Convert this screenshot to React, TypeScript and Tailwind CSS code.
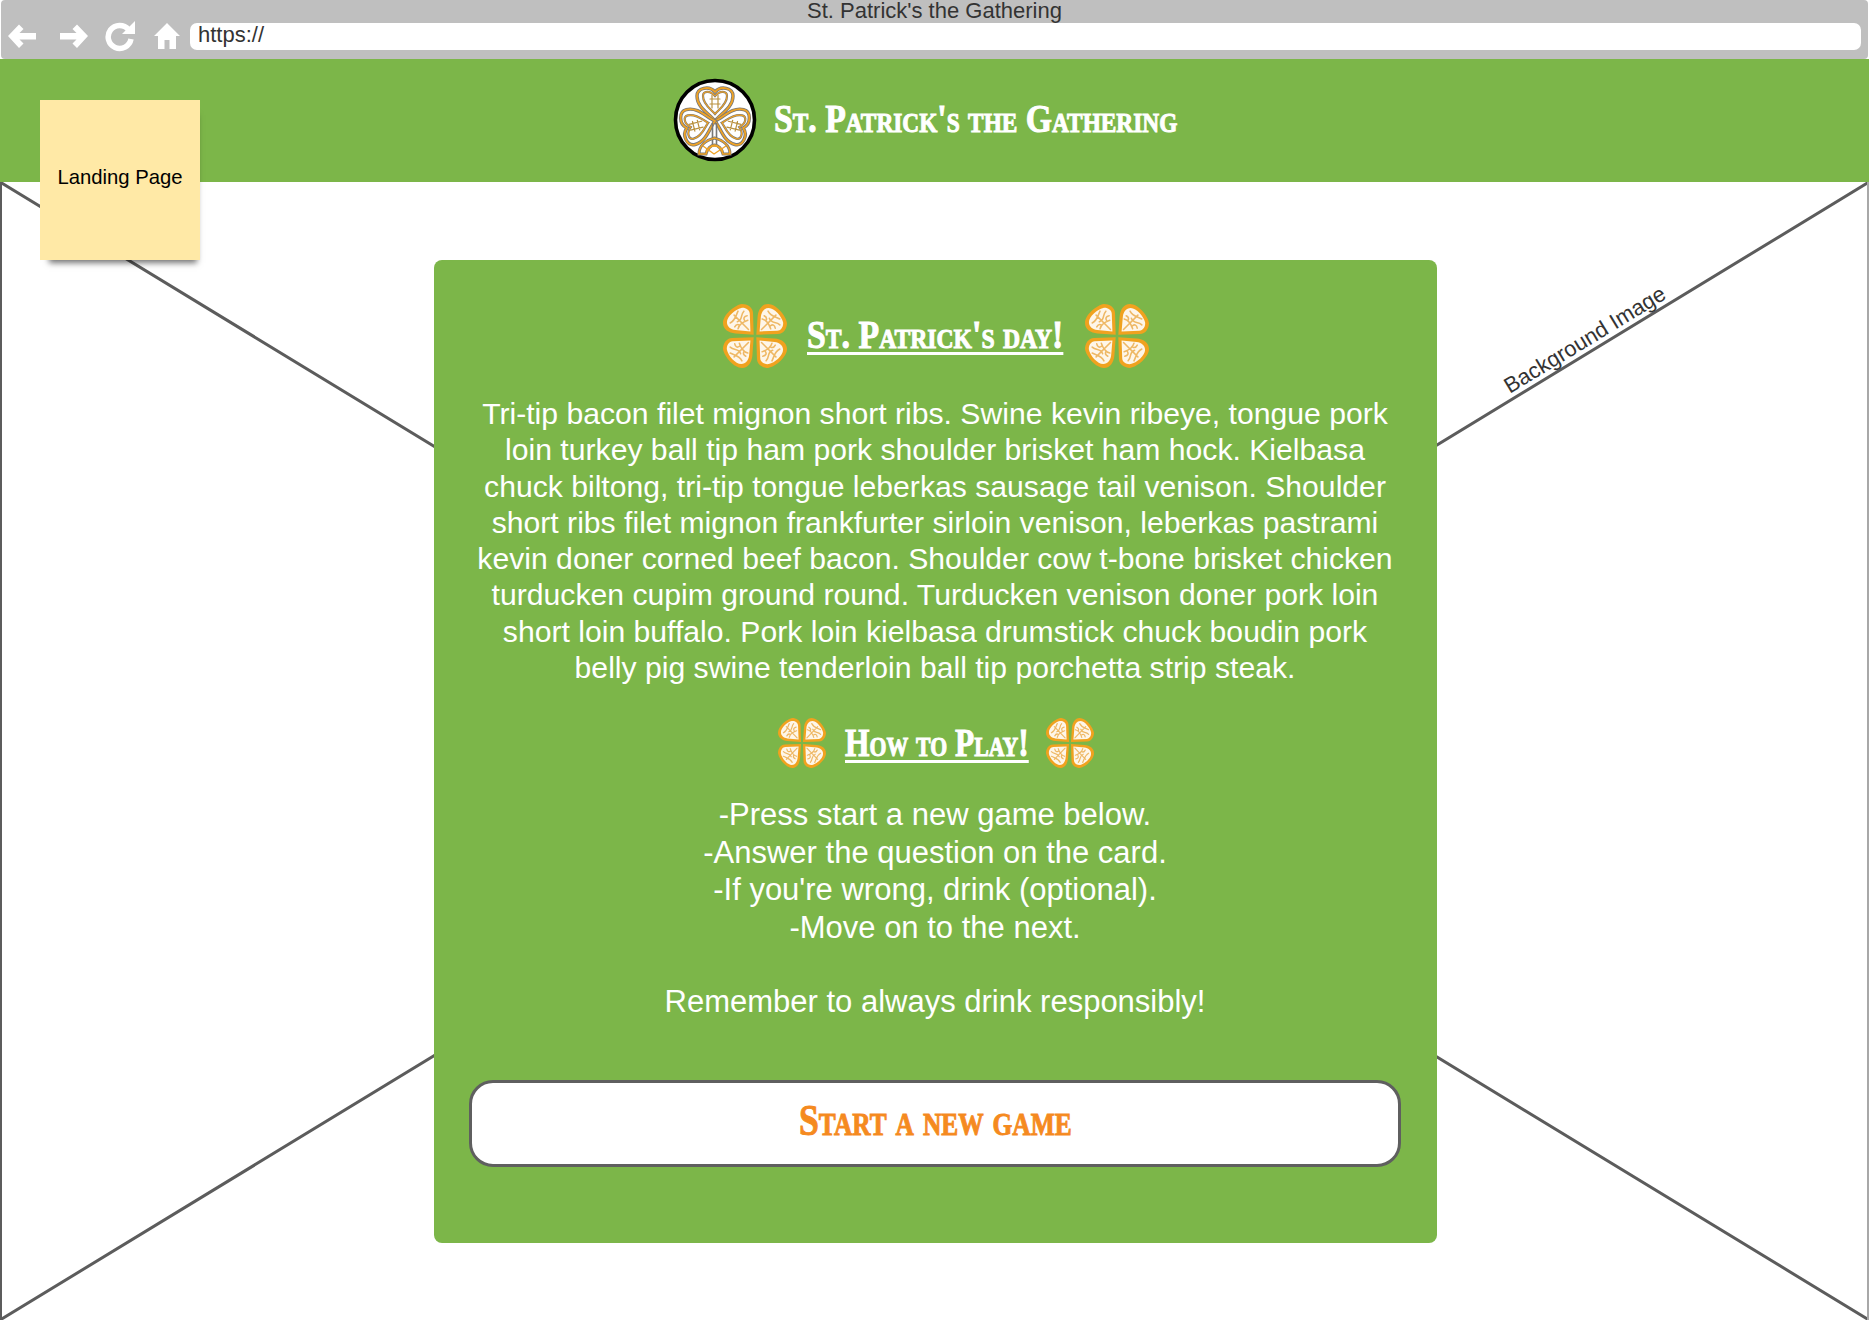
import React from "react";

const HEART = "M0 0C-5 -7 -18 -13 -18 -25C-18 -33 -6 -36 0 -29C6 -36 18 -33 18 -25C18 -13 5 -7 0 0Z";
const INNER = "M0 -7C-3 -11 -12 -16 -12 -25C-12 -30 -5 -31 0 -25C5 -31 12 -30 12 -25C12 -16 3 -11 0 -7Z";
const ARROW = "M2 15L13 3.5L17.5 8L13.5 12H30V18.5H13.5L17.5 22.5L13 27Z";

function LogoHeart({ r }: { r: number }) {
  return (
    <g transform={`translate(42 43) rotate(${r})`} fill="none" strokeLinecap="round">
      <path d={HEART} stroke="#777" strokeWidth="3.4" />
      <path d={HEART} stroke="#efa326" strokeWidth="1.8" />
      <path d={INNER} stroke="#777" strokeWidth="2.2" />
      <path d={INNER} stroke="#efa326" strokeWidth="1.1" />
      <path d="M-5 -22H5M-5 -17H5M-3 -26V-13M3 -26V-13" stroke="#b9913f" strokeWidth="1.2" />
    </g>
  );
}

function Logo() {
  return (
    <svg viewBox="0 0 84 84" className="w-[84px] h-[84px] shrink-0">
      <circle cx="42" cy="42" r="39.5" fill="#fff" stroke="#000" strokeWidth="3.6" />
      <LogoHeart r={0} />
      <LogoHeart r={104} />
      <LogoHeart r={-104} />
      <path d="M39.5 45V66M43.5 45V66" fill="none" stroke="#777" strokeWidth="1.6" />
      <path d="M41.5 60C34 62 26 67 26 76H33C34 71 38 67 41.5 67C45 67 49 71 50 76H57C57 67 49 62 41.5 60Z" fill="none" stroke="#777" strokeWidth="3" />
      <path d="M41.5 60C34 62 26 67 26 76H33C34 71 38 67 41.5 67C45 67 49 71 50 76H57C57 67 49 62 41.5 60Z" fill="none" stroke="#efa326" strokeWidth="1.6" />
      <path d="M33 74C37 66 46 66 50 74M30 68L41 76L53 68" fill="none" stroke="#efa326" strokeWidth="1.4" />
    </svg>
  );
}

function Leaf({ r }: { r: number }) {
  return (
    <g transform={`translate(50 50) rotate(${r})`}>
      <path d="M-2 -2L-3 -35C-3 -44 -12 -49 -20 -49C-32 -47 -49 -32 -49 -20C-49 -10 -40 -5 -30 -4Z" fill="#f0a21f" />
      <path d="M-7 -7L-8 -34C-8 -40 -15 -44 -21 -43C-30 -41 -43 -30 -43 -21C-43 -14 -37 -10 -30 -9Z" fill="#fff" fillOpacity="0.9" />
      <path d="M-10 -10L-32 -32M-26 -11C-24 -19 -17 -22 -11 -24M-38 -20C-30 -24 -30 -30 -26 -38M-17 -38C-23 -32 -18 -25 -27 -22M-12 -31C-17 -30 -18 -27 -16 -24M-31 -14C-29 -18 -26 -18 -24 -17" fill="none" stroke="#eeb865" strokeWidth="2.4" strokeLinecap="round" />
    </g>
  );
}

function Clover({ className }: { className: string }) {
  return (
    <svg viewBox="1 1 98 98" preserveAspectRatio="none" className={className}>
      <Leaf r={0} />
      <Leaf r={90} />
      <Leaf r={180} />
      <Leaf r={270} />
    </svg>
  );
}

const slab = "font-['Liberation_Serif',serif] font-bold [font-variant-caps:small-caps] whitespace-nowrap inline-block origin-left [-webkit-text-stroke:1px_currentColor] text-left";

export default function App() {
  return (
    <div className="relative w-[1869px] h-[1320px] bg-white overflow-hidden font-['Liberation_Sans',Arial,sans-serif]">
      <svg className="absolute left-0 top-[182px] w-[1869px] h-[1138px]" viewBox="0 0 1869 1138">
        <path d="M0 0L1869 1138M1869 0L0 1138" stroke="#5c5c5c" strokeWidth="3" fill="none" />
        <path d="M1 0V1138" stroke="#5c5c5c" strokeWidth="2" />
        <path d="M1868 0V1138" stroke="#a8a8a8" strokeWidth="2" />
      </svg>

      {/* browser bar */}
      <div className="relative h-[59px] mx-[1px] bg-[#bfbfbf] rounded-[4px]">
        <div className="absolute left-0 right-0 top-[-1px] text-center text-[22px] leading-[24px] text-[#333]">St. Patrick's the Gathering</div>
        <div className="flex items-center h-full pt-[13px] pl-[5px]">
          <svg viewBox="0 0 30 30" className="w-[30px] h-[30px]">
            <path d={ARROW} fill="#fff" />
          </svg>
          <svg viewBox="0 0 30 30" className="w-[30px] h-[30px] ml-[23px]">
            <path d={ARROW} fill="#fff" transform="translate(31 0) scale(-1 1)" />
          </svg>
          <svg viewBox="0 0 32 32" className="w-[32px] h-[32px] ml-[15px]">
            <path d="M24.5 9.5A11.5 11.5 0 1 0 27 19" fill="none" stroke="#fff" strokeWidth="5.5" />
            <path d="M31 1V14H18Z" fill="#fff" />
          </svg>
          <svg viewBox="0 0 28 28" className="w-[28px] h-[28px] ml-[17px]">
            <path d="M14 1L27 14H23V27H16.5V18H11.5V27H5V14H1Z" fill="#fff" />
          </svg>
          <div className="ml-[9px] flex-1 mr-[7px] h-[27px] bg-white rounded-[7px] pl-[8px] text-[22px] leading-[24px] text-[#333]">https://</div>
        </div>
      </div>

      {/* header */}
      <header className="relative h-[123px] bg-[#7cb649] flex items-center justify-center gap-[17px] pr-[19px] pb-[2px]">
        <Logo />
        <div className="w-[403px] h-[44px] -mt-[2px]">
          <div className={`${slab} scale-x-[0.864] text-[39px] leading-[44px] text-white`}>St. Patrick's the Gathering</div>
        </div>
      </header>

      {/* sticky note */}
      <div className="absolute left-[40px] top-[100px] w-[160px] h-[160px] pb-[6px] bg-[#ffe9a6] flex items-center justify-center text-[20.3px] text-black shadow-[3px_9px_6px_-6px_rgba(0,0,0,0.55)]">
        Landing Page
      </div>

      <div className="absolute left-[1585px] top-[340px] -translate-x-1/2 -translate-y-1/2 -rotate-[31.3deg] text-[22px] leading-[24px] whitespace-nowrap text-[#333]">Background Image</div>

      {/* card */}
      <main className="relative flex justify-center pt-[78px] pl-[1px]">
        <section className="w-[1003px] bg-[#7cb649] rounded-[8px] pt-[43px] px-[35px] pb-[76px] text-white text-center">
          <div className="flex items-center justify-center gap-[20px] h-[66px] pl-[2px]">
            <Clover className="w-[64px] h-[64px]" />
            <div className="w-[258px] h-[46px] -mt-[2px]">
              <h1 className={`${slab} scale-x-[0.845] text-[40px] leading-[46px] underline decoration-[3px] underline-offset-[4px] [text-decoration-skip-ink:none]`}>St. Patrick's day!</h1>
            </div>
            <Clover className="w-[64px] h-[64px]" />
          </div>
          <p className="mt-[27px] text-[30.16px] leading-[36.3px]">
            Tri-tip bacon filet mignon short ribs. Swine kevin ribeye, tongue pork<br />
            loin turkey ball tip ham pork shoulder brisket ham hock. Kielbasa<br />
            chuck biltong, tri-tip tongue leberkas sausage tail venison. Shoulder<br />
            short ribs filet mignon frankfurter sirloin venison, leberkas pastrami<br />
            kevin doner corned beef bacon. Shoulder cow t-bone brisket chicken<br />
            turducken cupim ground round. Turducken venison doner pork loin<br />
            short loin buffalo. Pork loin kielbasa drumstick chuck boudin pork<br />
            belly pig swine tenderloin ball tip porchetta strip steak.
          </p>
          <div className="mt-[32px] flex items-center justify-center gap-[19px] h-[50px] pl-[1px]">
            <Clover className="w-[48px] h-[50px]" />
            <div className="w-[182px] h-[44px]">
              <h2 className={`${slab} scale-x-[0.807] text-[39px] leading-[44px] underline decoration-[3px] underline-offset-[4px] [text-decoration-skip-ink:none]`}>How to Play!</h2>
            </div>
            <Clover className="w-[48px] h-[50px]" />
          </div>
          <p className="mt-[28px] text-[31px] leading-[37.4px]">
            -Press start a new game below.<br />
            -Answer the question on the card.<br />
            -If you're wrong, drink (optional).<br />
            -Move on to the next.<br />
            <br />
            Remember to always drink responsibly!
          </p>
          <button className="mt-[59px] w-[932px] h-[87px] bg-white border-[3px] border-[#5f5f5f] rounded-[24px] flex items-center justify-center">
            <div className="w-[272px] h-[50px] -mt-[6px]">
              <span className={`${slab} scale-x-[0.794] text-[45px] leading-[50px] text-[#f58a1f]`}>Start a new game</span>
            </div>
          </button>
        </section>
      </main>
    </div>
  );
}
